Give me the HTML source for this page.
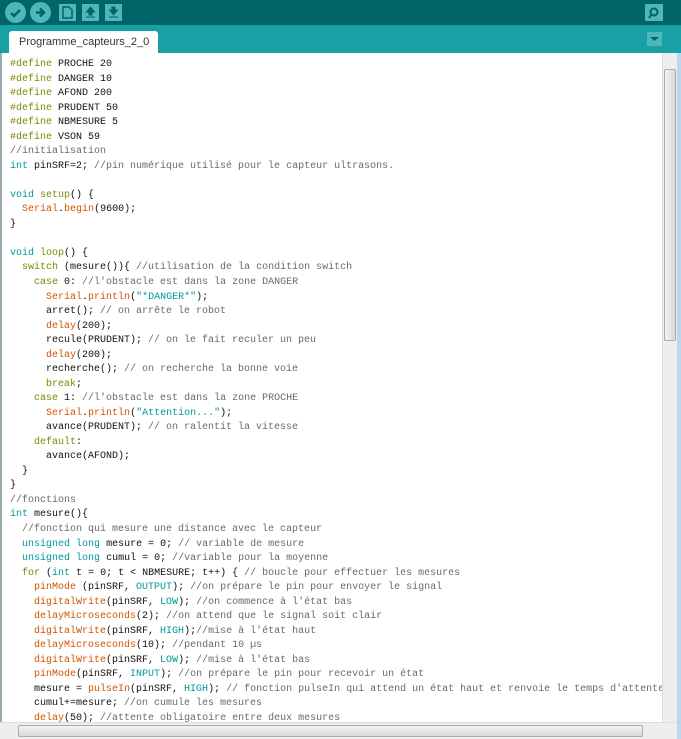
<!DOCTYPE html><html><head><meta charset="utf-8"><style>
*{margin:0;padding:0;box-sizing:border-box}
body{width:681px;height:739px;overflow:hidden;background:#fff;position:relative;font-family:"Liberation Sans",sans-serif}
#tb{position:absolute;left:0;top:0;width:681px;height:25px;background:#006468}
#tabs{position:absolute;left:0;top:25px;width:681px;height:28px;background:#17A1A5}
#tab{position:absolute;left:9px;top:6px;width:149px;height:22px;background:#fff;border-radius:3px 3px 0 0;font-size:11px;color:#333;padding:5px 0 0 10px;white-space:nowrap}
.c{position:absolute;top:2px;width:21px;height:21px;border-radius:50%;background:#4DB7BB}
.s{position:absolute;top:4px;width:17px;height:17px;background:#4DB7BB}
#ed{position:absolute;left:0;top:53px;width:662px;height:669px;border-left:2px solid #9aa;overflow:hidden}
pre{position:absolute;left:8px;top:5px;font-family:"Liberation Mono",monospace;font-size:10px;line-height:14.53px;color:#111;white-space:pre}
.k{color:#00979C}.o{color:#728E00}.f{color:#D35400}.g{color:#6a6a6a}
#vs{position:absolute;left:662px;top:53px;width:15px;height:669px;background:#eee;border-left:1px solid #ddd}
#vt{position:absolute;left:1px;top:16px;width:12px;height:272px;background:linear-gradient(90deg,#f4f4f4,#d8d8d8);border:1px solid #aaa;border-radius:2px}
#hs{position:absolute;left:0;top:722px;width:677px;height:17px;background:#eee;border-top:1px solid #ddd}
#ht{position:absolute;left:18px;top:2px;width:625px;height:12px;background:linear-gradient(#f4f4f4,#d8d8d8);border:1px solid #aaa;border-radius:2px}
#rb{position:absolute;left:677px;top:53px;width:4px;height:686px;background:#bcd6ee}
</style></head><body>
<div id="tb">
<div class="c" style="left:5px"><svg width="21" height="21"><path d="M6 11l3 3 6-6" stroke="#006468" stroke-width="2.5" fill="none"/></svg></div>
<div class="c" style="left:30px"><svg width="21" height="21"><path d="M6 10.5h8M10 6.5l4 4-4 4" stroke="#006468" stroke-width="2.5" fill="none"/></svg></div>
<div class="s" style="left:59px"><svg width="17" height="17"><path d="M4 3h6l3 3v8H4z" fill="none" stroke="#006468" stroke-width="1.5"/></svg></div>
<div class="s" style="left:82px"><svg width="17" height="17"><path d="M8.5 3l4 5h-2.5v3h-3v-3H4.5zM4 13h9" fill="#006468" stroke="#006468"/></svg></div>
<div class="s" style="left:105px"><svg width="17" height="17"><path d="M8.5 11l4-5h-2.5v-3h-3v3H4.5zM4 13h9" fill="#006468" stroke="#006468"/></svg></div>
<div class="s" style="left:645px;width:18px"><svg width="18" height="17"><circle cx="9" cy="8" r="3.5" fill="none" stroke="#006468" stroke-width="2"/><path d="M6 11l-2 3" stroke="#006468" stroke-width="2"/></svg></div>
</div>
<div id="tabs"><div id="tab">Programme_capteurs_2_0</div>
<div style="position:absolute;left:647px;top:7px;width:15px;height:14px;background:#4DB7BB"><svg width="15" height="14"><path d="M3 5h9l-4.5 4z" fill="#006468"/></svg></div></div>
<div id="ed"><pre><span class="o">#define</span> PROCHE 20
<span class="o">#define</span> DANGER 10
<span class="o">#define</span> AFOND 200
<span class="o">#define</span> PRUDENT 50
<span class="o">#define</span> NBMESURE 5
<span class="o">#define</span> VSON 59
<span class="g">//initialisation</span>
<span class="k">int</span> pinSRF=2; <span class="g">//pin numérique utilisé pour le capteur ultrasons.</span>

<span class="k">void</span> <span class="o">setup</span>() {
  <span class="f">Serial</span>.<span class="f">begin</span>(9600);
}

<span class="k">void</span> <span class="o">loop</span>() {
  <span class="o">switch</span> (mesure()){ <span class="g">//utilisation de la condition switch</span>
    <span class="o">case</span> 0: <span class="g">//l'obstacle est dans la zone DANGER</span>
      <span class="f">Serial</span>.<span class="f">println</span>(<span class="k">"*DANGER*"</span>);
      arret(); <span class="g">// on arrête le robot</span>
      <span class="f">delay</span>(200);
      recule(PRUDENT); <span class="g">// on le fait reculer un peu</span>
      <span class="f">delay</span>(200);
      recherche(); <span class="g">// on recherche la bonne voie</span>
      <span class="o">break</span>;
    <span class="o">case</span> 1: <span class="g">//l'obstacle est dans la zone PROCHE</span>
      <span class="f">Serial</span>.<span class="f">println</span>(<span class="k">"Attention..."</span>);
      avance(PRUDENT); <span class="g">// on ralentit la vitesse</span>
    <span class="o">default</span>:
      avance(AFOND);
  }
}
<span class="g">//fonctions</span>
<span class="k">int</span> mesure(){
  <span class="g">//fonction qui mesure une distance avec le capteur</span>
  <span class="k">unsigned</span> <span class="k">long</span> mesure = 0; <span class="g">// variable de mesure</span>
  <span class="k">unsigned</span> <span class="k">long</span> cumul = 0; <span class="g">//variable pour la moyenne</span>
  <span class="o">for</span> (<span class="k">int</span> t = 0; t &lt; NBMESURE; t++) { <span class="g">// boucle pour effectuer les mesures</span>
    <span class="f">pinMode</span> (pinSRF, <span class="k">OUTPUT</span>); <span class="g">//on prépare le pin pour envoyer le signal</span>
    <span class="f">digitalWrite</span>(pinSRF, <span class="k">LOW</span>); <span class="g">//on commence à l'état bas</span>
    <span class="f">delayMicroseconds</span>(2); <span class="g">//on attend que le signal soit clair</span>
    <span class="f">digitalWrite</span>(pinSRF, <span class="k">HIGH</span>);<span class="g">//mise à l'état haut</span>
    <span class="f">delayMicroseconds</span>(10); <span class="g">//pendant 10 µs</span>
    <span class="f">digitalWrite</span>(pinSRF, <span class="k">LOW</span>); <span class="g">//mise à l'état bas</span>
    <span class="f">pinMode</span>(pinSRF, <span class="k">INPUT</span>); <span class="g">//on prépare le pin pour recevoir un état</span>
    mesure = <span class="f">pulseIn</span>(pinSRF, <span class="k">HIGH</span>); <span class="g">// fonction pulseIn qui attend un état haut et renvoie le temps d'attente</span>
    cumul+=mesure; <span class="g">//on cumule les mesures</span>
    <span class="f">delay</span>(50); <span class="g">//attente obligatoire entre deux mesures</span>
  }</pre></div>
<div id="vs"><div id="vt"></div></div>
<div id="hs"><div id="ht"></div></div>
<div id="rb"></div>
</body></html>
